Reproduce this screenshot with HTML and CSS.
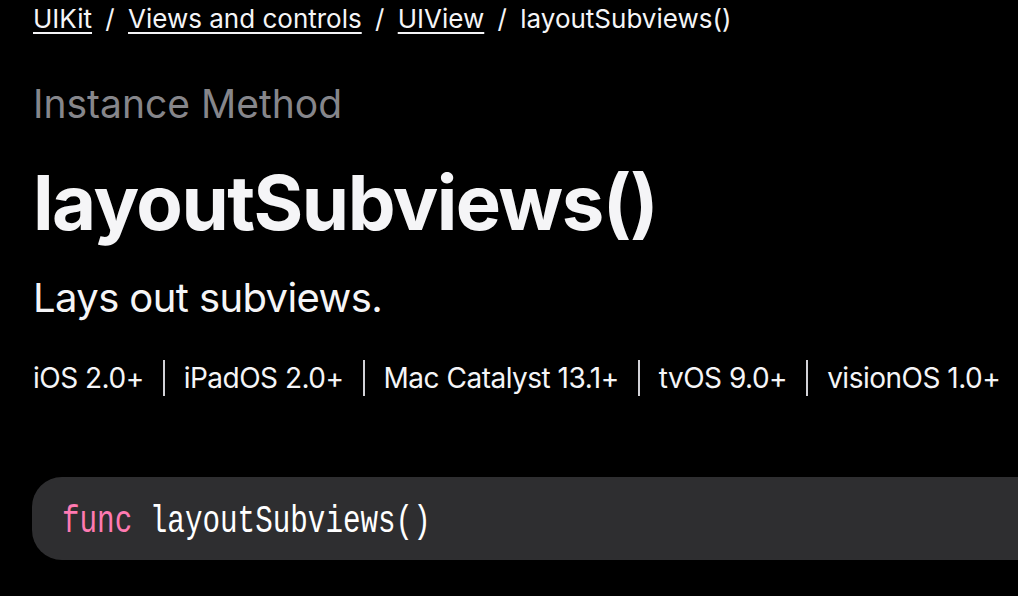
FILE: index.html
```html
<!DOCTYPE html>
<html lang="en">
<head>
    <meta charset="UTF-8">
    <meta name="viewport" content="width=device-width, initial-scale=1.0">
    <title>layoutSubviews() | Apple Developer Documentation</title>
    <link rel="stylesheet" href="styles.css">
</head>
<body>

    <div class="page">
        <nav class="breadcrumbs">
            <a href="#">UIKit</a>
            <span class="slash">/</span>
            <a href="#">Views and controls</a>
            <span class="slash">/</span>
            <a href="#">UIView</a>
            <span class="slash">/</span>
            <span class="current">layoutSubviews()</span>
        </nav>

        <div class="eyebrow">Instance Method</div>
        <h1 class="title">layoutSubviews()</h1>
        <p class="abstract">Lays out subviews.</p>

        <ul class="platforms">
            <li>iOS 2.0+</li>
            <li>iPadOS 2.0+</li>
            <li>Mac Catalyst 13.1+</li>
            <li>tvOS 9.0+</li>
            <li>visionOS 1.0+</li>
        </ul>

        <div class="declaration">
            <code><span class="keyword">func</span> layoutSubviews()</code>
        </div>
    </div>

</body>
</html>
```

FILE: styles.css
```css
/* page */
body {
    margin: 0;
    padding: 0;
    background-color: #000;
    color: #f5f5f7;
    font-family: 'Inter', 'Noto Sans', sans-serif;
    overflow: hidden;
}

.page {
    padding: 3px 0 0 33px;
}

/* breadcrumbs */
.breadcrumbs {
    font-size: 26px;
    line-height: 32px;
    white-space: nowrap;
}

.breadcrumbs a {
    color: #f5f5f7;
    text-decoration: underline;
    text-decoration-thickness: 2px;
    text-underline-offset: 4px;
}

.slash {
    margin: 0 6px;
}

/* heading */
.eyebrow {
    margin-top: 47px;
    font-size: 39px;
    line-height: 44px;
    color: #86868b;
}

.title {
    margin: 31px 0 0;
    font-size: 76px;
    line-height: 90px;
    font-weight: 700;
    letter-spacing: -1.5px;
}

.abstract {
    margin: 27px 0 0;
    font-size: 40px;
    line-height: 48px;
    letter-spacing: -0.6px;
}

/* availability */
.platforms {
    list-style: none;
    margin: 38px 0 0;
    padding: 0;
    display: flex;
    font-size: 28px;
    line-height: 36px;
    letter-spacing: -0.5px;
    white-space: nowrap;
}

.platforms li + li {
    border-left: 2px solid #d2d2d7;
    margin-left: 19px;
    padding-left: 19px;
}

/* declaration */
.declaration {
    margin: 81px -60px 0 -1px;
    height: 83px;
    background-color: #2e2e30;
    border-radius: 30px 0 0 30px;
    display: flex;
    align-items: center;
    padding-left: 30px;
}

.declaration code {
    display: inline-block;
    font-family: 'Liberation Mono', 'DejaVu Sans Mono', monospace;
    font-size: 38px;
    color: #fff;
    transform: scaleX(0.77);
    transform-origin: left center;
    margin-top: 6px;
}

.keyword {
    color: #ff7ab2;
}
```
